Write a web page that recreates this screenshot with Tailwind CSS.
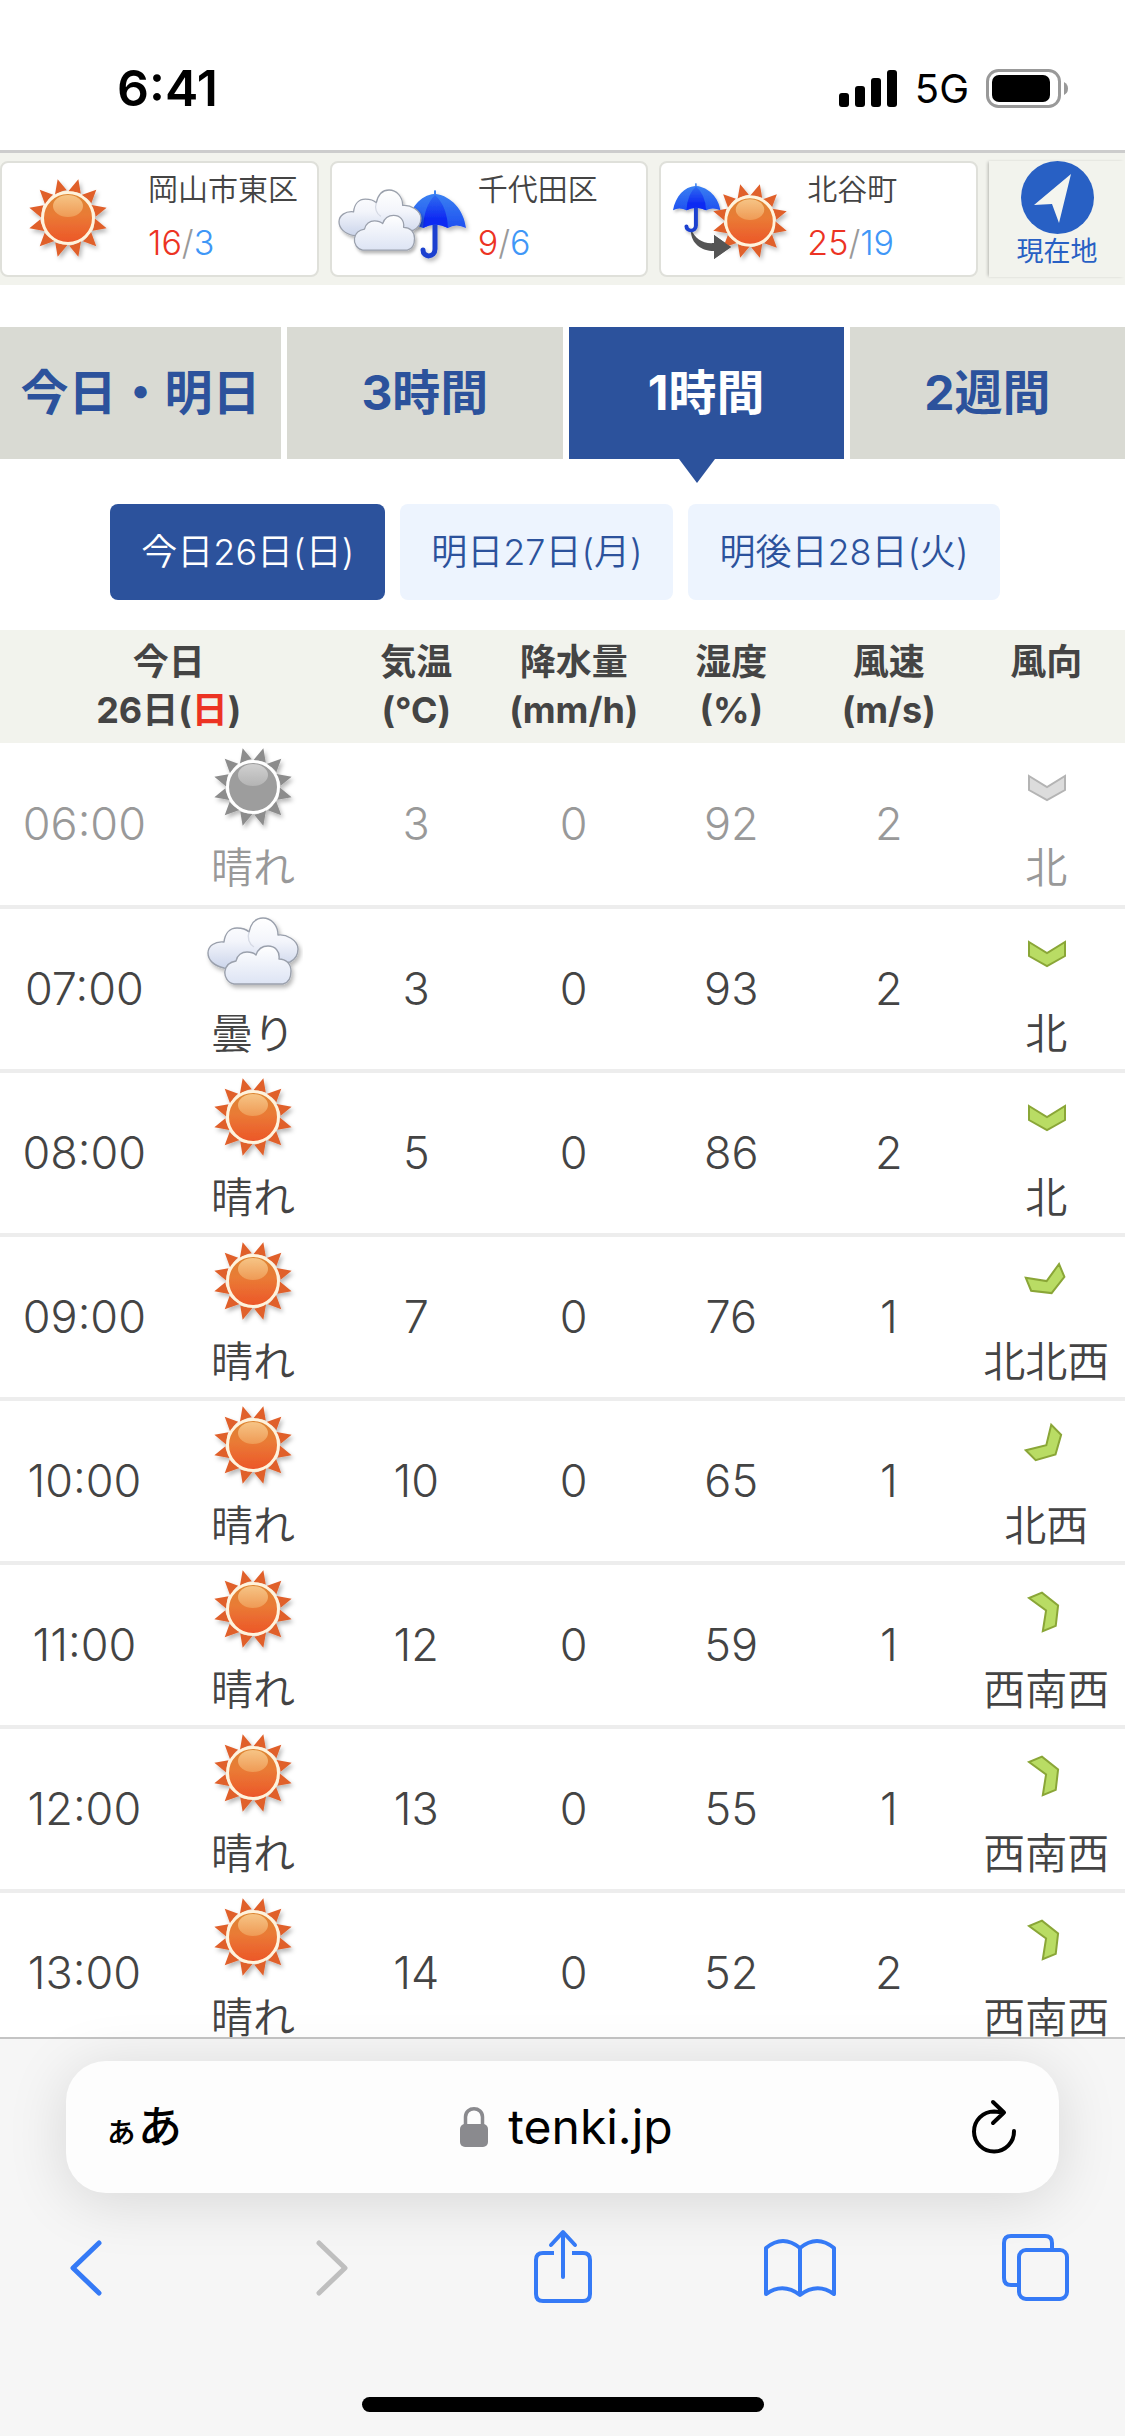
<!DOCTYPE html>
<html lang="ja">

<head>
    <meta charset="UTF-8">
    <meta name="viewport" content="width=device-width, initial-scale=1.0">
    <title>1時間天気 - tenki.jp</title>
    <script src="https://cdn.jsdelivr.net/npm/@tailwindcss/browser@4"></script>
</head>

<body class="h-screen flex flex-col overflow-hidden bg-white text-[#444] font-['Inter','Noto_Sans_CJK_JP',sans-serif]">

    <!-- shared icons -->
    <svg class="absolute w-0 h-0" aria-hidden="true">
        <defs>
            <linearGradient id="disc" x1="0" y1="0" x2="0" y2="1">
                <stop offset="0" stop-color="#dc8733" />
                <stop offset=".45" stop-color="#ea7a35" />
                <stop offset="1" stop-color="#ec5528" />
            </linearGradient>
            <linearGradient id="gloss" x1="0" y1="0" x2="0" y2="1">
                <stop offset="0" stop-color="#f6c485" />
                <stop offset="1" stop-color="#ef9a55" />
            </linearGradient>
            <linearGradient id="glossGray" x1="0" y1="0" x2="0" y2="1">
                <stop offset="0" stop-color="#d0d0d0" />
                <stop offset="1" stop-color="#b4b4b4" />
            </linearGradient>
            <linearGradient id="cloudFill" x1="0" y1="0" x2="0" y2="1">
                <stop offset="0" stop-color="#ffffff" />
                <stop offset=".45" stop-color="#f3f5fb" />
                <stop offset="1" stop-color="#c9d3ea" />
            </linearGradient>
            <linearGradient id="cloudFront" x1="0" y1="0" x2="0" y2="1">
                <stop offset="0" stop-color="#ffffff" />
                <stop offset="1" stop-color="#dde4f4" />
            </linearGradient>
            <linearGradient id="canopy" x1="0" y1="0" x2="0" y2="1">
                <stop offset="0" stop-color="#3d86f2" />
                <stop offset="1" stop-color="#1f50f0" />
            </linearGradient>
            <linearGradient id="canopyMid" x1="0" y1="0" x2="0" y2="1">
                <stop offset="0" stop-color="#2f6cf0" />
                <stop offset=".7" stop-color="#0f2cf2" />
            </linearGradient>
            <filter id="shadow" x="-20%" y="-20%" width="150%" height="150%">
                <feDropShadow dx="2" dy="3" stdDeviation="2" flood-color="#000" flood-opacity=".28" />
            </filter>
            <path id="ray" d="M0 -40 L6 -27 Q0 -28 -7 -25 Z" />
            <g id="rays">
                <use href="#ray" transform="rotate(15)" />
                <use href="#ray" transform="rotate(45)" />
                <use href="#ray" transform="rotate(75)" />
                <use href="#ray" transform="rotate(105)" />
                <use href="#ray" transform="rotate(135)" />
                <use href="#ray" transform="rotate(165)" />
                <use href="#ray" transform="rotate(195)" />
                <use href="#ray" transform="rotate(225)" />
                <use href="#ray" transform="rotate(255)" />
                <use href="#ray" transform="rotate(285)" />
                <use href="#ray" transform="rotate(315)" />
                <use href="#ray" transform="rotate(345)" />
            </g>
            <g id="sun" filter="url(#shadow)">
                <use href="#rays" fill="#e0602c" />
                <circle r="25.5" fill="url(#disc)" stroke="#fff3dc" stroke-width="3" />
                <ellipse cy="-12" rx="15" ry="11" fill="url(#gloss)" />
            </g>
            <g id="sunGray" filter="url(#shadow)">
                <use href="#rays" fill="#8c8c8c" />
                <circle r="25.5" fill="#9d9d9d" stroke="#fff" stroke-width="3" />
                <ellipse cy="-12" rx="15" ry="11" fill="url(#glossGray)" />
            </g>
            <g id="cloud" filter="url(#shadow)" stroke="#9aa0ac" stroke-width="1.4" stroke-linejoin="round">
                <path fill="url(#cloudFill)" d="M16 50C6 48 0 42 0 35C0 28 7 23 16 24C17 15 22 10 29 10C34 10 38 11 41 14C43 5 48 0 55 0C63 0 70 7 70 17C78 16 90 22 90 31C90 38 86 42 82 44L30 52Z" />
                <path fill="none" stroke="#d5d9e4" d="M41 14C39 20 41 26 46 29" />
                <path fill="url(#cloudFront)" d="M26 66C20 65 16 59 17 53C18 47 22 44 28 43C29 37 34 34 39 34C43 34 46 35 48 37C50 31 54 28 60 28C67 28 72 33 71 41C78 41 83 46 83 53C83 60 80 65 75 66Z" />
            </g>
            <g id="umbrella" filter="url(#shadow)">
                <path fill="none" stroke="#1b41cf" stroke-width="5" stroke-linecap="round" d="M29 34V59C29 68 17 68 17 60" />
                <path fill="url(#canopy)" d="M0 38C3 18 15 5 28 4V1Q29 -1 30 1V4C45 6 58 20 60 38Q50 33 42 38Q29 31 17 38Q8 33 0 38Z" />
                <path fill="url(#canopyMid)" d="M29 5Q18 16 17 38Q29 31 42 38Q41 16 29 5Z" />
            </g>
            <path id="chevron" stroke-width="2" d="M-18 -12L0 -1L18 -12V2L0 12L-18 2Z" />
        </defs>
    </svg>

    <!-- status bar -->
    <div class="shrink-0 flex items-center justify-between h-[150px] pt-[27px] pl-[117px] pr-[56px] text-black">
        <span class="text-[50px] font-semibold">6:41</span>
        <div class="flex items-center gap-[17px]">
            <svg class="w-[59px] h-[38px]" viewBox="0 0 59 38">
                <rect x="0" y="23" width="10" height="14" rx="3" />
                <rect x="16" y="16" width="10" height="21" rx="3" />
                <rect x="32" y="8" width="10" height="29" rx="3" />
                <rect x="48" y="0" width="10" height="37" rx="3" />
            </svg>
            <span class="text-[40px]">5G</span>
            <svg class="w-[83px] h-[40px]" viewBox="0 0 83 40">
                <rect x="1.5" y="1.5" width="72" height="36" rx="11" fill="none" stroke="#999" stroke-width="3" />
                <rect x="6" y="6" width="58" height="27" rx="7" />
                <path d="M78 13Q82 15 82 19.500T78 26Z" fill="#999" />
            </svg>
        </div>
    </div>

    <main class="flex-1 min-h-0 overflow-hidden">

        <!-- saved places -->
        <nav class="flex border-t-3 border-[#ccc] bg-[#f2f3ed] pt-[8px] pb-[8px]">
            <div class="flex-1 flex gap-[11px] font-[350]">
                <a href="#" class="flex-1 flex h-[116px] rounded-lg border-2 border-[#dfe0da] bg-white">
                    <svg class="w-[146px] h-[112px]" viewBox="2 2 146 112">
                        <use href="#sun" transform="translate(68 57)" />
                    </svg>
                    <div class="pt-[8px] leading-9">
                        <p class="text-[30px]">岡山市東区</p>
                        <p class="mt-[18px] text-[34px] text-[#999]"><span class="text-[#ec3323]">16</span>/<span class="text-[#3f97f7]">3</span></p>
                    </div>
                </a>
                <a href="#" class="flex-1 flex h-[116px] rounded-lg border-2 border-[#dfe0da] bg-white">
                    <svg class="w-[146px] h-[112px]" viewBox="2 2 146 112">
                        <use href="#umbrella" transform="translate(76 29)" />
                        <use href="#cloud" transform="translate(9 29) scale(.91)" />
                    </svg>
                    <div class="pt-[8px] leading-9">
                        <p class="text-[30px]">千代田区</p>
                        <p class="mt-[18px] text-[34px] text-[#999]"><span class="text-[#ec3323]">9</span>/<span class="text-[#3f97f7]">6</span></p>
                    </div>
                </a>
                <a href="#" class="flex-1 flex h-[116px] rounded-lg border-2 border-[#dfe0da] bg-white">
                    <svg class="w-[146px] h-[112px]" viewBox="2 2 146 112">
                        <path fill="#555" d="M32 68C36 78 44 83 55 82V74L72 86L55 98V90C42 90 31 82 32 68Z" />
                        <use href="#umbrella" transform="translate(14 22) scale(.79 .72)" />
                        <use href="#sun" transform="translate(91 60) scale(.95)" />
                        <path fill="#555" d="M55 74L72 86L55 98Z" />
                    </svg>
                    <div class="pt-[8px] leading-9">
                        <p class="text-[30px]">北谷町</p>
                        <p class="mt-[18px] text-[34px] text-[#999]"><span class="text-[#ec3323]">25</span>/<span class="text-[#3f97f7]">19</span></p>
                    </div>
                </a>
            </div>
            <a href="#" class="ml-[11px] w-[136px] h-[116px] flex flex-col items-center text-[#2860c4] shadow-[-2px_0_3px_-1px_rgba(0,0,0,0.25)]">
                <svg class="w-[73px] h-[73px]" viewBox="0 0 73 73">
                    <circle cx="36.500" cy="36.500" r="36.500" fill="#2860c4" />
                    <path fill="#f4f5ef" d="M50 13L38 62L31 43L13 44Z" />
                </svg>
                <span class="text-[27px] leading-9">現在地</span>
            </a>
        </nav>

        <!-- forecast range -->
        <nav class="mt-[42px] flex gap-[6px] text-[48px] font-bold text-[#2c529c]">
            <a href="#" class="w-1/4 shrink-0 h-[132px] flex items-center justify-center bg-[#d9dad3] whitespace-nowrap">今日・明日</a>
            <a href="#" class="flex-1 h-[132px] flex items-center justify-center bg-[#d9dad3]">3時間</a>
            <a href="#" class="relative flex-1 h-[132px] flex items-center justify-center bg-[#2c529c] text-white">1時間
                <svg class="absolute top-full left-2/5 w-[36px] h-[24px]" viewBox="0 0 36 24">
                    <path fill="#2c529c" d="M0 0H36L18 24Z" />
                </svg>
            </a>
            <a href="#" class="flex-1 h-[132px] flex items-center justify-center bg-[#d9dad3]">2週間</a>
        </nav>

        <div class="mt-[45px] mb-[30px] flex justify-center gap-[15px] pr-[15px] text-[36px] font-[350] text-[#2c529c]">
            <button class="h-24 px-[31px] rounded-lg bg-[#2c529c] text-white">今日26日(日)</button>
            <button class="h-24 px-[31px] rounded-lg bg-[#edf4fe]">明日27日(月)</button>
            <button class="h-24 px-[31px] rounded-lg bg-[#edf4fe]">明後日28日(火)</button>
        </div>

        <table class="w-full table-fixed text-center">
            <thead class="bg-[#f2f3ed] text-[36px] leading-[48px]">
                <tr class="h-[113px] align-top">
                    <th class="w-[30%] pt-[8px]" colspan="2">今日<br>26日(<span class="text-[#ec3323]">日</span>)</th>
                    <th class="w-[14%] pt-[8px]">気温<br>(℃)</th>
                    <th class="w-[14%] pt-[8px]">降水量<br>(mm/h)</th>
                    <th class="w-[14%] pt-[8px]">湿度<br>(%)</th>
                    <th class="w-[14%] pt-[8px]">風速<br>(m/s)</th>
                    <th class="w-[14%] pt-[8px]">風向</th>
                </tr>
            </thead>
            <tbody id="hours" class="text-[45px] font-light"></tbody>
        </table>
    </main>

    <!-- browser bar -->
    <footer class="shrink-0 border-t-2 border-[#c4c4c4] bg-[#f6f6f6] pt-[22px] pb-[24px]">
        <div class="mx-[66px] h-[132px] flex items-center justify-between rounded-[40px] bg-[#fdfdfd] pl-[38px] pr-[42px] text-black shadow-[0_8px_60px_rgba(0,0,0,0.13)]">
            <button class="w-[92px] flex items-baseline font-medium text-[44px]" aria-label="ページ設定"><span class="text-[34px]">ぁ</span>あ</button>
            <button class="flex items-center gap-[20px] text-[48px]">
                <svg class="w-[28px] h-[40px]" viewBox="0 0 28 40" fill="#8a8a8e">
                    <path fill="none" stroke="#8a8a8e" stroke-width="3.500" d="M5.500 18V10C5.500 -1 22.500 -1 22.500 10V18" />
                    <rect y="17" width="28" height="23" rx="5" />
                </svg>
                tenki.jp
            </button>
            <button class="w-[80px] flex justify-end" aria-label="再読み込み">
                <svg class="w-[46px] h-[56px]" viewBox="0 0 46 56" fill="none" stroke="#000" stroke-width="4" stroke-linecap="round" stroke-linejoin="round">
                    <path d="M43 32A20 20 0 1 1 23 12.500L33 13.500M22 3L33 13.500L22 24" />
                </svg>
            </button>
        </div>
        <div class="mt-[34px] mx-[51px] h-[80px] flex items-center justify-between">
            <button aria-label="戻る">
                <svg class="w-[72px] h-[80px]" viewBox="0 0 72 80" fill="none" stroke="#357af6" stroke-width="5" stroke-linecap="round" stroke-linejoin="round">
                    <path d="M48 16L22 41L48 66" />
                </svg>
            </button>
            <button aria-label="進む" disabled>
                <svg class="w-[72px] h-[80px]" viewBox="0 0 72 80" fill="none" stroke="#bfbfbf" stroke-width="5" stroke-linecap="round" stroke-linejoin="round">
                    <path d="M30 16L56 41L30 66" />
                </svg>
            </button>
            <button aria-label="共有">
                <svg class="w-[72px] h-[80px]" viewBox="-6 0 72 80" fill="none" stroke="#357af6" stroke-width="4" stroke-linecap="round" stroke-linejoin="round">
                    <path stroke-linecap="butt" d="M21 26H10Q3 26 3 33V67Q3 74 10 74H50Q57 74 57 67V33Q57 26 50 26H39" />
                    <path d="M30 50V6M18 18L30 5L42 18" />
                </svg>
            </button>
            <button aria-label="ブックマーク">
                <svg class="w-[72px] h-[80px]" viewBox="0 0 72 80" fill="none" stroke="#357af6" stroke-width="4" stroke-linecap="round" stroke-linejoin="round">
                    <path d="M36 21Q19 7 2 21V67Q19 55 36 68Q53 55 70 67V21Q53 7 36 21V68" />
                </svg>
            </button>
            <button aria-label="タブ">
                <svg class="w-[72px] h-[80px]" viewBox="0 0 72 80" fill="none" stroke="#357af6" stroke-width="4">
                    <path d="M17 58H9Q2 58 2 51V16Q2 9 9 9H43Q50 9 50 16V23" />
                    <rect x="17" y="23" width="48" height="49" rx="7" />
                </svg>
            </button>
        </div>
        <div class="mx-auto mt-[90px] h-[15px] w-[402px] rounded-full bg-black"></div>
    </footer>

</body>

<script>
    // time, icon, weather, temp, rain, humidity, wind speed, wind direction
    const hours = [
        ["06:00", "sunGray", "晴れ", 3, 0, 92, 2, "北"],
        ["07:00", "cloud", "曇り", 3, 0, 93, 2, "北"],
        ["08:00", "sun", "晴れ", 5, 0, 86, 2, "北"],
        ["09:00", "sun", "晴れ", 7, 0, 76, 1, "北北西"],
        ["10:00", "sun", "晴れ", 10, 0, 65, 1, "北西"],
        ["11:00", "sun", "晴れ", 12, 0, 59, 1, "西南西"],
        ["12:00", "sun", "晴れ", 13, 0, 55, 1, "西南西"],
        ["13:00", "sun", "晴れ", 14, 0, 52, 2, "西南西"]
    ]
    const angles = { "北": 0, "北北西": -22.5, "北西": -45, "西南西": -112.5 }

    let list = ""
    for (let i = 0; i < hours.length; i++) {
        const [time, icon, weather, temp, rain, humidity, speed, wind] = hours[i]
        const past = i === 0
        const place = icon === "cloud" ? "translate(5 9)" : "translate(50 44)"
        list += `<tr class="h-[164px] border-b-4 border-[#ededed] ${past ? "text-[#999]" : ""}">
            <td>${time}</td>
            <td class="align-top">
                <svg class="mx-auto w-[100px] h-[88px]" viewBox="0 0 100 88"><use href="#${icon}" transform="${place}" /></svg>
                <p class="mt-[9px] text-[42px] leading-[56px] font-[350] whitespace-nowrap">${weather}</p>
            </td>
            <td>${temp}</td>
            <td>${rain}</td>
            <td>${humidity}</td>
            <td>${speed}</td>
            <td class="align-top">
                <svg class="mx-auto w-[60px] h-[88px]" viewBox="0 0 60 88" fill="${past ? "#dcdcdc" : "#b9dc64"}" stroke="${past ? "#b4b4b4" : "#8aa637"}">
                    <use href="#chevron" transform="translate(31 45) rotate(${angles[wind]})" />
                </svg>
                <p class="mt-[9px] text-[42px] leading-[56px] font-[350] whitespace-nowrap">${wind}</p>
            </td>
        </tr>`
    }
    document.getElementById("hours").innerHTML = list
</script>

</html>
